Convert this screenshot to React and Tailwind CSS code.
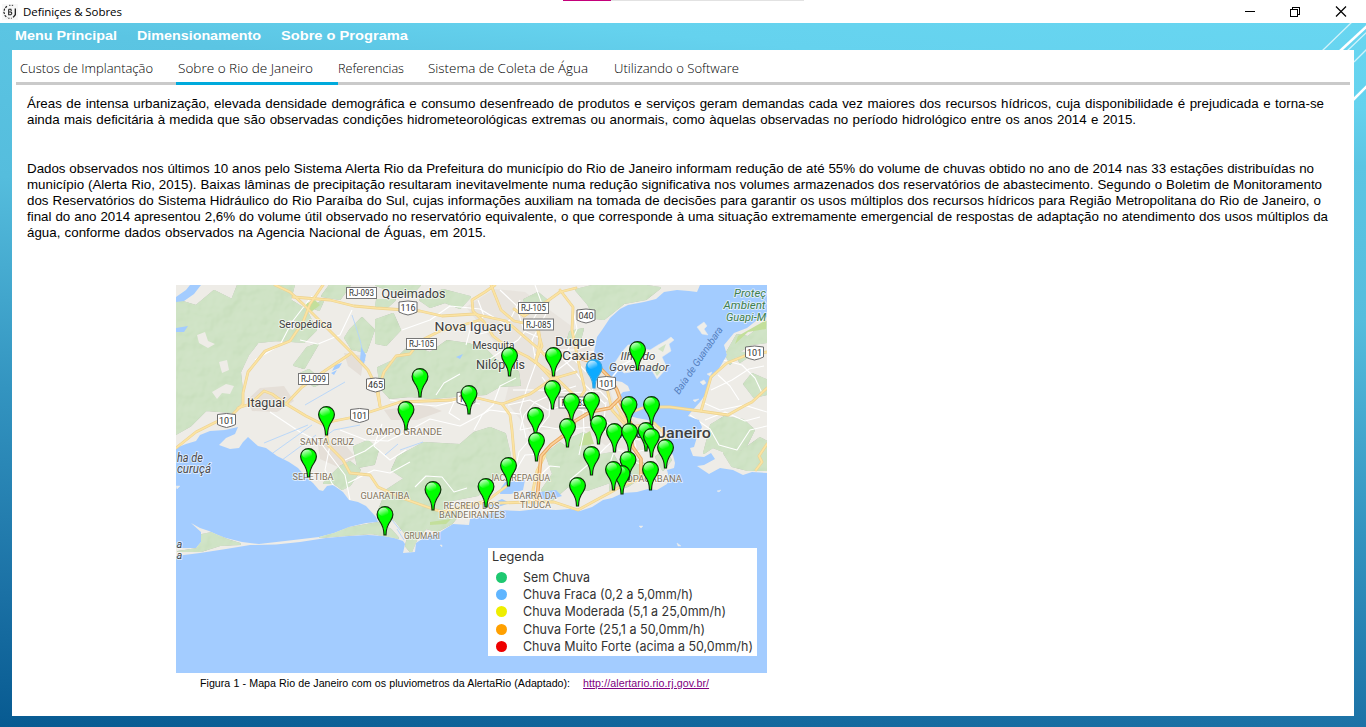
import React from "react";

const ROBOTO = "Roboto, 'Liberation Sans', sans-serif";

function Line({ w, children }) {
  return (
    <div
      style={{ width: w }}
      className="h-4 whitespace-nowrap leading-4 [text-align-last:justify]"
    >
      {children}
    </div>
  );
}

const pins = [
  [509.5, 376], [553.5, 376], [637.5, 370], [420, 397], [469, 414], [326.5, 435], [406, 430],
  [552.5, 409], [571.5, 422], [591.5, 421], [629, 425], [651.5, 425], [535.5, 436], [598.5, 444],
  [567.5, 447], [614.5, 452], [629.5, 452], [646, 451], [651.5, 457], [536.5, 461], [665.5, 468],
  [308.5, 477], [591.5, 475], [628, 480], [508.5, 486], [622, 494], [613.5, 490], [650.5, 490],
  [433, 510], [486, 507], [577.5, 506], [385, 535],
];

function Pin({ x, y, fill = "#00ff00", stroke = "#10300c", glow = "url(#shine)" }) {
  return (
    <g transform={`translate(${x} ${y})`}>
      <path
        d="M-1 0C-1-7-2.500-10-5.500-14C-7.500-17-7.900-18.500-7.900-20.500A7.900 7.900 0 0 1 7.900-20.500C7.900-18.500 7.500-17 5.500-14C2.500-10 1-7 1 0Z"
        fill={fill}
        stroke={stroke}
        strokeWidth="1.200"
      />
      <ellipse cx="-1.500" cy="-23" rx="5" ry="4.300" fill={glow} />
    </g>
  );
}

function Plate({ x, y, w, children }) {
  return (
    <g>
      <rect x={x - w / 2} y={y - 5.5} width={w} height="11" fill="#fff" stroke="#777" />
      <text x={x} y={y + 3.3} fontSize="9" textAnchor="middle" fill="#333" textLength={w - 5} lengthAdjust="spacingAndGlyphs">{children}</text>
    </g>
  );
}

function Shield({ x, y, children }) {
  return (
    <g>
      <path
        d={`M${x - 9} ${y - 6}Q${x} ${y - 8} ${x + 9} ${y - 6}V${y + 4}Q${x + 5} ${y + 6} ${x} ${y + 7}Q${x - 5} ${y + 6} ${x - 9} ${y + 4}Z`}
        fill="#fff"
        stroke="#6b6b6b"
      />
      <text x={x} y={y + 3.300} fontSize="9" textAnchor="middle" fill="#333">{children}</text>
    </g>
  );
}

const main =
  "M176 285H700L697 292L689 291L677 290L664 292L656 299L644 302L628 305L620 309L610 318L602 330L597 337L594 352L597 362L603 371L612 380L622 382L628 386L630 391L623 392L618 397L622 404L628 408L630 416L637 418L648 420L656 424L667 432L668 440L667 448L673 455L675 463L674 468L667 470L669 478L667 484L657 490L648 489L637 492L623 493L612 498L603 500L592 507L580 511L570 509L556 510L537 509L520 511L500 510L486 515L470 519L469 525L453 524L445 529L439 533L425 537L416 543L415 552L403 553L405 544L403 541L394 538L383 536L368 535L349 536L326 538L300 542L276 544.500L250 545L226 549L200 553L176 556V548L196 548L201 542L201 532L191 523L200 528L209 531L218 535L226 538L242 542L259 544L285 541L319 537L334 533L349 527L366 523L378 522L376 517L366 506L358 502L349 500L343 492L333 485L327 486L323 491L319 490L313 483L306 477L298 468L289 462L277 456L266 448L258 446L248 437L243 442L239 448L230 449L219 445L226 438L235 434L238 427L225 430L210 431L200 435L196 441L186 444L176 448Z";
const east =
  "M767 317L757 320L747 328L734 333L724 345L727 355L717 372L709 382L705 395L700 402L691 412L688 416L699 420L702 427L697 437L694 447L690 448L693 456L704 457L711 453L715 459L704 465L697 466L709 474L720 468L733 470L743 475L752 472L767 473Z";

const greens = [
  "M176 300L196 306L214 291L232 300L238 285L294 285L290 300L306 310L316 330L304 342L278 340L258 342L248 355L240 372L243 400L232 412L206 410L190 426L176 434Z",
  "M330 285L350 285L340 299L322 296Z",
  "M312 307L323 301L319 310Z",
  "M306 380L300 374L309 370L323 382L314 386Z",
  "M350 330L362 318L374 330L366 352L352 349L345 338Z",
  "M318 344L304 368L294 365L307 348Z",
  "M420 300L443 290L470 297L460 308L445 302L430 307Z",
  "M376 320L393 314L400 330L386 345L376 343Z",
  "M378 368L395 360L410 346L430 353L447 341L468 344L485 349L497 361L518 372L520 385L500 386L486 394L455 396L432 398L410 396L390 398L381 388Z",
  "M376 285L420 285L410 296L395 292Z",
  "M377 300L395 300L386 308L376 306Z",
  "M398 457L424 443L460 445L474 433L490 428L505 434L510 455L504 474L490 483L478 495L452 500L441 509L434 497L419 484L407 480L392 470Z",
  "M354 447L368 441L378 450L374 464L358 467Z",
  "M324 483L340 467L350 462L360 470L350 485L342 489L334 483Z",
  "M387 490L410 475L430 488L440 505L460 513L452 523L437 531L426 528L417 538L411 552L406 546L408 537L396 521L379 510Z",
  "M320 537L350 528L378 523L391 530L398 538L372 533L345 535Z",
  "M202 535L212 533L227 540L240 544L220 545L201 551L178 552L197 549Z",
  "M546 454L560 443L569 449L590 457L612 453L620 467L610 482L587 490L568 486L552 500L542 490L553 474Z",
  "M612 469L638 461L648 466L643 476L628 486L610 490Z",
  "M568 440L584 433L591 448L580 460L564 456Z",
  "M576 290L592 286L610 285L640 285L660 288L646 299L624 303L604 319L595 318L588 304Z",
  "M524 300L538 293L549 302L535 313Z",
  "M570 332L583 329L579 344L567 343Z",
  "M726 354L737 335L748 337L767 322V342L752 344L738 352L730 364Z",
  "M735 352L752 354L740 362Z",
  "M711 425L724 417L743 420L754 430L745 448L728 453L713 447L704 453L708 438Z",
  "M724 453L742 451L760 438L767 442V470L748 470L732 466Z",
  "M744 384L752 374L766 380L767 394L754 397Z",
  "M656 457L665 450L671 460L663 470Z",
];

const minor = [
  "M255 360L280 345L292 322L312 296", "M300 340L318 344L340 335L352 310",
  "M270 412L300 432L320 442L345 475L350 500", "M340 430L366 440L388 441L410 430L430 419L460 426L490 410L520 414",
  "M330 445L325 470L334 487", "M345 460L365 451L390 433", "M382 424L374 446L390 460L406 450",
  "M348 483L374 470L390 473L410 462", "M402 330L430 320L450 306L480 309L505 324",
  "M478 300L484 316L470 330L466 345", "M500 290L516 305L524 331L540 338", "M520 300L510 320L495 330L480 334",
  "M535 285L542 304L530 325L518 340L490 359", "M548 310L532 340L536 363L528 385L520 410L526 438",
  "M513 390L540 390L570 393L600 391L615 407", "M508 405L530 400L548 410L566 405L590 413L612 425",
  "M520 430L540 426L565 430L590 427L622 437L640 440", "M542 377L551 389L549 416L538 430L519 452L513 480",
  "M598 376L590 396L583 408L584 432L579 455", "M606 402L604 420L617 443L610 463",
  "M558 354L574 370L585 385L605 404", "M573 310L577 329L567 352L586 372",
  "M570 480L590 463L606 447L620 435", "M510 480L525 455L542 454L556 442",
  "M535 480L550 466L560 467", "M690 415L710 429L719 445L737 450L750 430L767 426",
  "M704 403L720 410L744 405L767 412", "M711 390L732 380L749 369L764 366", "M718 375L730 386L739 400",
  "M705 420L725 412L745 421L760 417", "M723 360L742 365L755 378L762 393",
  "M390 400L414 404L436 406L460 400L480 404", "M436 395L444 383L460 374",
  "M415 487L426 476L442 477L454 492L467 488", "M455 400L449 413L460 420",
  "M632 430L636 448L631 461L648 466L660 480", "M618 450L630 453L645 450L656 441",
  "M474 430L482 415L493 405L500 386L516 378", "M605 350L580 353L560 368L549 377",
  "M576 386L560 391L535 402L524 415L520 430", "M535 355L550 350L574 350L590 345",
];

const roads = [
  "M275 285L290 292L303 304L315 316L337 338L353 354L368 370L376 386L380 406",
  "M323 285L310 304L303 322L290 341L265 351L248 372L243 393L243 404L230 417L216 422L196 432L176 448",
  "M293 297L330 300L354 306L376 308L420 311L442 316L474 314L506 321L541 351L553 364",
  "M350 354L326 370L302 387L286 404L272 394L264 391L250 404L238 408",
  "M286 404L306 416L322 424L334 421L354 417L376 410L400 402L452 400L469 396L502 404L530 394L552 379L576 372",
  "M380 406L378 390L384 372L396 356L410 354L420 341L440 331L456 327L480 320",
  "M326 430L328 445L343 460L350 473L370 475L378 487L402 498L433 509L442 512L470 506L488 500L508 485L515 465L512 430L510 415L502 404",
  "M495 285L485 292L472 300L473 311L484 322L493 336L506 346L528 357L553 375L573 394",
  "M491 285L501 310L514 321L538 326L540 340L536 362L551 378",
  "M514 309L524 316L546 302L560 292L576 288",
  "M560 290L573 307L572 330L576 350L580 369L585 390L578 401L569 416",
  "M535 362L542 346L537 328",
  "M442 512L475 503L500 503L530 502L554 502L578 510L600 498L613 491L621 486L646 477L650 465",
  "M535 503L533 490L537 471L545 455",
  "M615 404L625 420L632 412L645 407L670 407L700 411L728 415L744 406L752 402L767 388",
  "M701 411L711 377L727 363L747 355L767 352",
  "M620 414L631 427L654 423L666 435L661 443",
  "M756 470L762 462L759 456L767 444",
  "M605 380L612 410L626 426L632 443",
];

const orange = "M537 500L541 456L551 445L571 430L575 421L590 412L610 408L620 398L617 390L609 377L602 370L592 362L577 357M620 402L631 424L632 446L641 459L641 479";

const Map = () => (
  <svg viewBox="176 285 591 388" width="591" height="388" className="block" fontFamily={ROBOTO}>
    <defs>
      <linearGradient id="shine" x1="0" y1="0" x2="0.500" y2="1">
        <stop offset="0" stopColor="#fff" stopOpacity="0.900" />
        <stop offset="1" stopColor="#fff" stopOpacity="0" />
      </linearGradient>
      <clipPath id="land">
        <path d={main} />
        <path d={east} />
      </clipPath>
      <filter id="relief" x="0" y="0" width="100%" height="100%" colorInterpolationFilters="sRGB">
        <feTurbulence type="fractalNoise" baseFrequency="0.05" numOctaves="3" seed="8" result="n" />
        <feDiffuseLighting in="n" surfaceScale="3" diffuseConstant="0.640" lightingColor="#ffffff" result="l">
          <feDistantLight azimuth="225" elevation="52" />
        </feDiffuseLighting>
        <feComposite in="l" in2="SourceGraphic" operator="in" result="s" />
        <feBlend in="s" in2="SourceGraphic" mode="soft-light" result="b" />
        <feComposite in="b" in2="SourceGraphic" operator="arithmetic" k1="0" k2="0.450" k3="0.550" k4="0" />
      </filter>
    </defs>
    <rect x="176" y="285" width="591" height="388" fill="#a3ccff" />
    <g clipPath="url(#land)">
      <rect x="176" y="285" width="591" height="388" fill="#eeece7" />
      <g fill="#e5dfd8">
        <path d="M247 400L260 388L284 386L294 401L277 412L252 411Z" />
        <path d="M466 307L494 289L525 292L570 325L592 350L606 378L616 408L645 426L664 445L640 452L605 445L578 425L530 432L505 400L514 365L484 330Z" opacity="0.600" />
        <path d="M317 439L343 442L356 458L338 467L320 459ZM384 410L424 404L442 411L417 420L391 420ZM344 353L364 356L361 376L348 366Z" />
      </g>
      <g fill="#cfe3c5" filter="url(#relief)" strokeLinejoin="round" stroke="#cfe3c5" strokeWidth="2">
        {greens.map((d) => <path key={d} d={d} />)}
      </g>
      <g fill="#eeece7">
        <path d="M197 335l8-3 3 9 7 3-7 4-9-5ZM212 392l14-8 8 2-4 8-8-1-5 6ZM219 362l8-2 2 10-7 3ZM289 320l9 2-5 8-8-4Z" />
      </g>
      <path d="M305 304L315 300L320 305L311 312ZM430 522L451 519L446 524L430 525ZM738 336L766 320V329L748 332L735 344ZM583 435L590 431L594 444L579 446Z" fill="#c3df9b" />
      <g fill="none" stroke="#fff" strokeWidth="1.100" strokeLinejoin="round">
        {minor.map((d) => <path key={d} d={d} />)}
      </g>
      <path
        d="M352 315L356 327L360 340L365 361M264 443L308 425M270 455L312 425M282 460L316 435M305 405L345 382M320 440L334 430L360 425M385 455L398 444M400 450L423 442M397 529L404 540M392 520L401 531"
        fill="none"
        stroke="#b4d5fb"
        strokeWidth="0.900"
      />
      <g fill="#a3ccff">
        <path d="M176 297L186 290L190 285H201L194 294L184 301L176 302ZM176 328L188 326L184 332L176 332ZM361 347L366 355L364 364L360 360ZM335 365l7-2-3 5-7 3ZM331 373l6-3-3 5ZM456 357l7-3-3 5ZM324 376l5-2-2 4ZM501 488L508 478L516 482L525 480L523 490L511 494L500 494ZM540 492L556 490L562 496L549 500L541 499ZM528 491L536 491L533 497L524 499ZM625 474L631 472L632 478L627 479ZM486 506L502 499L510 503L498 507Z" />
      </g>
    </g>
    <path d="M697 327l7-5 3 4-3 3 4 6-6-1-2-3ZM614 364L622 352L628 345L637 344L645 349L650 350L658 345L667 340L671 337L674 340L669 344L671 351L662 357L667 368L657 379L651 369L640 368L631 372L624 373ZM700 382l4-2 2 3-3 2ZM707 374l5-2-2 4ZM693 400l6-1-4 3ZM622 415l5-5 2 3ZM176 486l4 0-3 3ZM639 526l4 0-2 2ZM677 543l4 3-3 0ZM717 491l4-1-2 2ZM440 545l2 0 0 2ZM465 520l3 3-3 1Z" fill="#efeee9" stroke="#e6ebee" strokeWidth="0.500" />
    <path d="M622 354L635 347L645 352L637 360ZM651 365L664 368L657 376ZM658 349l8-5-3 8Z" fill="#cfe3c5" />
    <g fill="none" strokeLinejoin="round" strokeLinecap="round">
      <g stroke="#edd28f" strokeWidth="2.800">{roads.map((d) => <path key={d} d={d} />)}</g>
      <g stroke="#fbe3a2" strokeWidth="1.700">{roads.map((d) => <path key={d} d={d} />)}</g>
      <path d={orange} stroke="#e9a860" strokeWidth="3.600" />
      <path d={orange} stroke="#fbd19a" strokeWidth="1.600" />
      <path d="M610 380L622 365L630 361" stroke="#fff" strokeWidth="1.500" />
    </g>

    <Plate x={361.500} y={293} w={30}>RJ-093</Plate>
    <Plate x={313.500} y={379} w={30}>RJ-099</Plate>
    <Plate x={421.500} y={344} w={30}>RJ-105</Plate>
    <Plate x={533.500} y={308} w={30}>RJ-105</Plate>
    <Plate x={538.500} y={324.500} w={30}>RJ-085</Plate>
    <Plate x={574} y={402.500} w={30}>RJ-083</Plate>
    <Shield x={408} y={308}>116</Shield>
    <Shield x={586} y={316}>040</Shield>
    <Shield x={754.500} y={353}>101</Shield>
    <Shield x={606.500} y={383.500}>101</Shield>
    <Shield x={375.500} y={385}>465</Shield>
    <Shield x={359.500} y={415.500}>101</Shield>
    <Shield x={226.500} y={420.500}>101</Shield>
    <Shield x={466} y={398.500}>101</Shield>

    <g stroke="#fff" strokeWidth="2" strokeOpacity="0.600" paintOrder="stroke" strokeLinejoin="round">
      <g fill="#404040">
        <text x="381.500" y="298" fontSize="12.500" textLength="64" lengthAdjust="spacingAndGlyphs">Queimados</text>
        <text x="434.500" y="331" fontSize="13.500" textLength="77" lengthAdjust="spacingAndGlyphs">Nova Iguaçu</text>
        <text x="472.500" y="349" fontSize="10.500" textLength="42" lengthAdjust="spacingAndGlyphs">Mesquita</text>
        <text x="476" y="369" fontSize="12.500" textLength="49" lengthAdjust="spacingAndGlyphs">Nilópolis</text>
        <text x="555" y="345.500" fontSize="13.500" textLength="40" lengthAdjust="spacingAndGlyphs">Duque</text>
        <text x="562" y="359.500" fontSize="13.500" textLength="42" lengthAdjust="spacingAndGlyphs">Caxias</text>
        <text x="279" y="328" fontSize="10.500" textLength="53" lengthAdjust="spacingAndGlyphs">Seropédica</text>
        <text x="247" y="407" fontSize="12.500" textLength="38" lengthAdjust="spacingAndGlyphs">Itaguaí</text>
        <text x="608" y="438" fontSize="15" fontWeight="500" textLength="103" lengthAdjust="spacingAndGlyphs">Rio de Janeiro</text>
      </g>
      <g fill="#4c4c4c" fontStyle="italic" fontSize="11.500">
        <text x="620.500" y="359.500" textLength="35" lengthAdjust="spacingAndGlyphs">Ilha do</text>
        <text x="609" y="371" textLength="60" lengthAdjust="spacingAndGlyphs">Governador</text>
        <text x="177" y="461.500" fontSize="12" textLength="26" lengthAdjust="spacingAndGlyphs">ha de</text>
        <text x="177" y="473" fontSize="12" textLength="34" lengthAdjust="spacingAndGlyphs">curuçá</text>
        <text x="176.500" y="548" fontSize="11" textLength="5">a</text>
        <text x="176.500" y="559" fontSize="11" textLength="5">a</text>
      </g>
      <g fill="#82745d" fontSize="9.300">
        <text x="300" y="445" textLength="54" lengthAdjust="spacingAndGlyphs">SANTA CRUZ</text>
        <text x="292.500" y="480" textLength="41" lengthAdjust="spacingAndGlyphs">SEPETIBA</text>
        <text x="366" y="434.500" textLength="76" lengthAdjust="spacingAndGlyphs">CAMPO GRANDE</text>
        <text x="360.500" y="498.500" textLength="49" lengthAdjust="spacingAndGlyphs">GUARATIBA</text>
        <text x="489" y="480.500" textLength="61" lengthAdjust="spacingAndGlyphs">JACAREPAGUA</text>
        <text x="513.500" y="498.500" textLength="43" lengthAdjust="spacingAndGlyphs">BARRA DA</text>
        <text x="520" y="507.500" textLength="31" lengthAdjust="spacingAndGlyphs">TIJUCA</text>
        <text x="443.500" y="508.500" textLength="56" lengthAdjust="spacingAndGlyphs">RECREIO DOS</text>
        <text x="439" y="517.500" textLength="66" lengthAdjust="spacingAndGlyphs">BANDEIRANTES</text>
        <text x="404" y="539" textLength="36" lengthAdjust="spacingAndGlyphs">GRUMARI</text>
        <text x="620" y="481.500" textLength="62" lengthAdjust="spacingAndGlyphs">COPACABANA</text>
      </g>
      <g fill="#3f7f4b" fontStyle="italic" fontSize="11.500">
        <text x="734" y="297" textLength="32" lengthAdjust="spacingAndGlyphs">Proteç</text>
        <text x="723.500" y="308.500" textLength="42" lengthAdjust="spacingAndGlyphs">Ambient</text>
        <text x="726" y="320.500" textLength="40" lengthAdjust="spacingAndGlyphs">Guapi-M</text>
      </g>
    </g>
    <text transform="translate(679 395) rotate(-56)" fontSize="10" fontStyle="italic" fill="#557fc0" textLength="79">Baía de Guanabara</text>

    <Pin x={594} y={388} fill="#0daaff" stroke="#3aa5e0" />
    {pins.map(([x, y]) => <Pin key={`${x}-${y}`} x={x} y={y} />)}
  </svg>
);

const legend = [
  ["bg-[#1ec870]", "Sem Chuva", 67],
  ["bg-[#5fb5ff]", "Chuva Fraca (0,2 a 5,0mm/h)", 170],
  ["bg-[#eeee00]", "Chuva Moderada (5,1 a 25,0mm/h)", 203],
  ["bg-[#ffa000]", "Chuva Forte (25,1 a 50,0mm/h)", 182],
  ["bg-[#ee0000]", "Chuva Muito Forte (acima a 50,0mm/h)", 230],
];

function Legend() {
  return (
    <div className="absolute left-[312px] top-[263px] h-[108px] w-[269px] bg-white pl-1 font-['Inter','Liberation_Sans',sans-serif] text-[13px] text-[#333]">
      <div className="h-[21px] text-[12.700px] leading-[17px]">Legenda</div>
      {legend.map(([c, t, w]) => (
        <div key={t} className="flex h-[17.200px] items-center pl-[4px]">
          <span className={`size-[11px] shrink-0 rounded-full ${c}`} />
          <svg className="ml-4 h-[17px] w-[234px] overflow-visible">
            <text x="0" y="13" fill="#333" textLength={w} lengthAdjust="spacingAndGlyphs">{t}</text>
          </svg>
        </div>
      ))}
    </div>
  );
}

function TitleBar() {
  return (
    <header className="relative flex h-[23px] items-center bg-white">
      <svg width="16" height="16" viewBox="0 0 18 18" className="ml-[2px] bg-[#f7f7f7]" fill="none" stroke="#222">
        <path d="M5.500 2.500L3 5L2 9L3.500 13L6 15.500" strokeDasharray="2.400 1.400" strokeWidth="1.300" />
        <path d="M8 1.500h5M7 16h4" strokeDasharray="1.500 1.500" />
        <path d="M7.500 6v6h2.500q2-1.500 0-3H7.500M7.500 6h2.500l0.500 2" strokeWidth="1.200" />
        <path d="M15 5v7l-2.500 3" strokeWidth="1.500" />
      </svg>
      <span className="ml-[5px] font-['Open_Sans','Noto_Sans',sans-serif] text-[11.500px] tracking-[-0.080px] text-black">
        Definiçes &amp; Sobres
      </span>
      <div className="absolute left-[563px] top-0 flex h-px">
        <div className="w-12 bg-[#c4007a]" />
        <div className="w-[193px] bg-[#e2e2e2]" />
      </div>
      <svg width="110" height="20" viewBox="1240 0 110 20" className="ml-auto mr-4" fill="none" stroke="#000" shapeRendering="crispEdges">
        <path d="M1245 9.500h10M1290.500 7.500h7v7h-7ZM1292.500 7.500v-2h7v7h-2" />
        <path d="M1336 4.500l10 10M1346 4.500l-10 10" shapeRendering="auto" strokeWidth="1.200" />
      </svg>
    </header>
  );
}

const menu = [["Menu Principal", "w-[122px]", 102], ["Dimensionamento", "w-36", 124], ["Sobre o Programa", "w-36", 127]];
const tabs = [
  ["Custos de Implantação", "w-[158px]", 133],
  ["Sobre o Rio de Janeiro", "w-40", 135],
  ["Referencias", "w-[90px]", 66],
  ["Sistema de Coleta de Água", "w-[186px]", 160],
  ["Utilizando o Software", "w-[160px]", 125],
];

export default function App() {
  return (
    <div className="flex h-[727px] w-[1366px] flex-col overflow-hidden bg-white">
      <TitleBar />
      <div className="relative flex-1 bg-[linear-gradient(186deg,#68d6f1_0%,#65d2ee_10%,#5bc5e3_17%,#55bddd_35%,#3394c0_60%,#1b71a5_84%,#075a91_100%)] pl-3 pr-3">
        <svg className="absolute right-0 top-0" width="50" height="90" viewBox="1316 23 50 90" fill="none" stroke="#fff">
          <path d="M1322 51L1352 22M1347 51L1368 31M1354 62L1367 49" strokeWidth="1.300" strokeOpacity="0.700" />
          <path d="M1340 51L1367 26" strokeWidth="2.500" />
          <path d="M1353 100L1367 86" strokeWidth="2.500" />
        </svg>
        <nav className="flex h-[27px] pl-[3px]">
          {menu.map(([t, c, w]) => (
            <svg key={t} className={`h-[27px] overflow-visible ${c}`}>
              <text x="0" y="17" fill="#fff" className="font-['Liberation_Sans',Arial,sans-serif] text-[13.300px] font-bold" textLength={w} lengthAdjust="spacingAndGlyphs">{t}</text>
            </svg>
          ))}
        </nav>
        <main className="relative flex h-[666px] w-[1342px] flex-col bg-white">
          <div className="mx-1 flex h-[35px] border-b-[3px] border-[#cacaca] pl-1">
            {tabs.map(([t, c, w], i) => (
              <div key={t} className={`relative h-[35px] ${c}`}>
                <svg className="h-8 w-full overflow-visible">
                  <text x="0" y="23" fill="#000" textLength={w} lengthAdjust="spacingAndGlyphs" className="font-['Open_Sans','Noto_Sans',sans-serif] text-[13.600px] font-light">{t}</text>
                </svg>
                {i === 1 && <div className="absolute -left-[2px] bottom-0 h-[3px] w-[162px] bg-[#00aadc]" />}
              </div>
            ))}
          </div>
          <article className="pl-[15px] pt-[11px] font-['Liberation_Sans',Arial,sans-serif] text-[13.330px] text-black">
            <Line w={1297}>Áreas de intensa urbanização, elevada densidade demográfica e consumo desenfreado de produtos e serviços geram demandas cada vez maiores dos recursos hídricos, cuja disponibilidade é prejudicada e torna-se</Line>
            <Line w={1109}>ainda mais deficitária à medida que são observadas condições hidrometeorológicas extremas ou anormais, como àquelas observadas no período hidrológico entre os anos 2014 e 2015.</Line>
            <div className="h-[33px]" />
            <Line w={1287}>Dados observados nos últimos 10 anos pelo Sistema Alerta Rio da Prefeitura do município do Rio de Janeiro informam redução de até 55% do volume de chuvas obtido no ano de 2014 nas 33 estações distribuídas no</Line>
            <Line w={1295}>município (Alerta Rio, 2015). Baixas lâminas de precipitação resultaram inevitavelmente numa redução significativa nos volumes armazenados dos reservatórios de abastecimento. Segundo o Boletim de Monitoramento</Line>
            <Line w={1294}>dos Reservatórios do Sistema Hidráulico do Rio Paraíba do Sul, cujas informações auxiliam na tomada de decisões para garantir os usos múltiplos dos recursos hídricos para Região Metropolitana do Rio de Janeiro, o</Line>
            <Line w={1301}>final do ano 2014 apresentou 2,6% do volume útil observado no reservatório equivalente, o que corresponde à uma situação extremamente emergencial de respostas de adaptação no atendimento dos usos múltiplos da</Line>
            <Line w={459}>água, conforme dados observados na Agencia Nacional de Águas, em 2015.</Line>
          </article>
          <figure className="ml-[164px] mt-[44px] w-[591px]">
            <div className="relative">
              <Map />
              <Legend />
            </div>
            <figcaption className="flex h-5 items-center pl-6 font-['Liberation_Sans',Arial,sans-serif] text-[10.670px] text-black">
              <span className="w-[370px] whitespace-nowrap [text-align-last:justify]">Figura 1 - Mapa Rio de Janeiro com os pluviometros da AlertaRio (Adaptado):</span>
              <span className="ml-[13px] tracking-[0.080px] text-[#800080] underline">http://alertario.rio.rj.gov.br/</span>
            </figcaption>
          </figure>
        </main>
      </div>
    </div>
  );
}
